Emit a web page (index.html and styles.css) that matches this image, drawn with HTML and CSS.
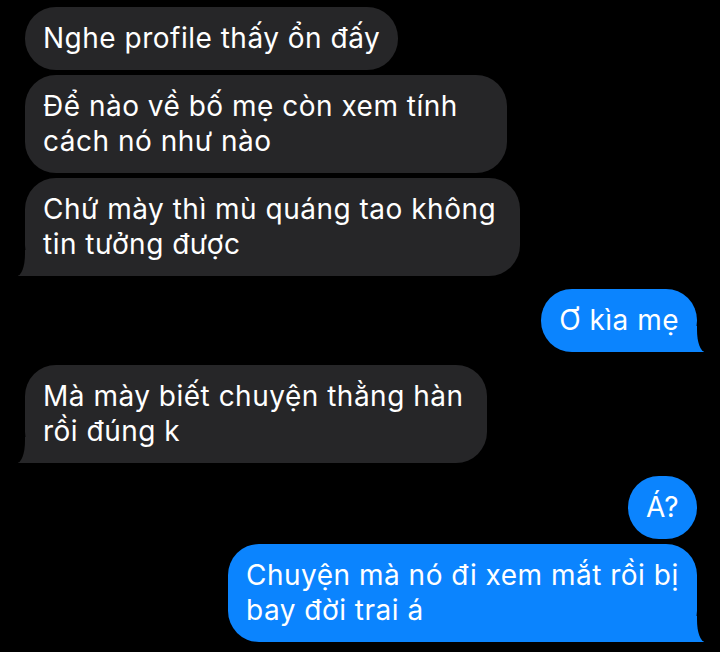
FILE: index.html
```html
<!DOCTYPE html>
<html lang="vi">
<head>
<meta charset="utf-8">
<link rel="stylesheet" href="styles.css">
</head>
<body>
<div class="chat">
  <div class="msg in">Nghe profile thấy ổn đấy</div>
  <div class="msg in w-482">Để nào về bố mẹ còn xem tính<br>cách nó như nào</div>
  <div class="msg in tail w-495">Chứ mày thì mù quáng tao không<br>tin tưởng được</div>
  <div class="msg out tail group-start">Ơ kìa mẹ</div>
  <div class="msg in tail group-start w-462">Mà mày biết chuyện thằng hàn<br>rồi đúng k</div>
  <div class="msg out group-start">Á?</div>
  <div class="msg out tail w-469">Chuyện mà nó đi xem mắt rồi bị<br>bay đời trai á</div>
</div>
</body>
</html>
```
FILE: styles.css
```css
html, body {
  margin: 0;
  padding: 0;
  background: #000;
}
body {
  width: 720px;
  height: 652px;
  overflow: hidden;
  font-family: Inter, "Noto Sans", "Liberation Sans", sans-serif;
}
.chat {
  display: flex;
  flex-direction: column;
  gap: 5px;
  padding: 7px 23px 0 25px;
}
.msg {
  position: relative;
  z-index: 0;
  box-sizing: border-box;
  padding: 14px 18px;
  border-radius: 31px;
  font-size: 28px;
  line-height: 35px;
  color: #fff;
  letter-spacing: 0.5px;
  white-space: nowrap;
}
.w-482 { width: 482px; }
.w-495 { width: 495px; }
.w-462 { width: 462px; }
.w-469 { width: 469px; }
.in {
  align-self: flex-start;
  background: #262628;
}
.out {
  align-self: flex-end;
  background: #0b84fe;
}
.group-start {
  margin-top: 8px;
}
.tail::before,
.tail::after {
  content: "";
  position: absolute;
  bottom: 0;
  z-index: -1;
  height: 26px;
}
.in.tail::before {
  left: -7px;
  width: 45px;
  background: #262628;
}
.in.tail::after {
  left: -24px;
  width: 24px;
  background: #000;
  border-bottom-right-radius: 8px 22px;
}
.out.tail::before {
  right: -7px;
  width: 45px;
  background: #0b84fe;
}
.out.tail::after {
  right: -24px;
  width: 24px;
  background: #000;
  border-bottom-left-radius: 8px 22px;
}
```
